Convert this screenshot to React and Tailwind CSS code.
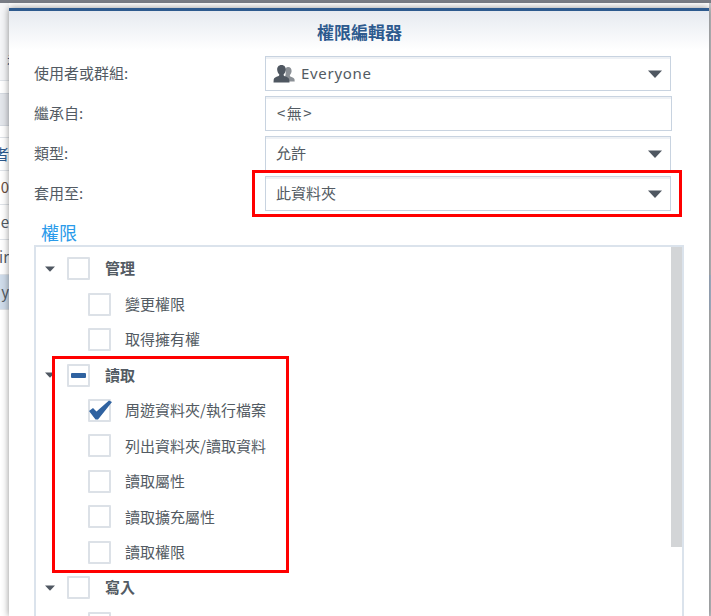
const font = { fontFamily: '"Noto Sans CJK TC", "Noto Sans", sans-serif' };

const permissionRows = [
  { label: "管理", group: true },
  { label: "變更權限" },
  { label: "取得擁有權" },
  { label: "讀取", group: true, state: "partial" },
  { label: "周遊資料夾/執行檔案", state: "checked" },
  { label: "列出資料夾/讀取資料" },
  { label: "讀取屬性" },
  { label: "讀取擴充屬性" },
  { label: "讀取權限" },
  { label: "寫入", group: true },
  { label: "" },
];

function Caret({ className }) {
  return (
    <svg className={className} viewBox="0 0 14 8" width="14" height="8">
      <path d="M0 0.5h14L7 8z" fill="#4f5761" />
    </svg>
  );
}

function GroupIcon() {
  return (
    <svg viewBox="0 0 22 20" width="22" height="20" className="shrink-0">
      <path d="M15 3c2.6 0 3.8 2 3.6 4.3-.1 1.500-.8 2.900-1.700 3.700-.2.800.1 1.300 1 1.700 1.600.6 3.300 1.200 3.600 2.600l.2 2.200h-5.700c0-2.800-1.500-3.700-4-4.700.9-2.500 1-5 .1-7C12.500 4 13.500 3 15 3z" fill="#8b9096" />
      <path d="M8.500 1c3 0 4.500 2.300 4.200 5-.2 1.800-.9 3.400-2 4.300-.2 1 .1 1.600 1.200 2 2 .8 4 1.500 4.300 3.200l.3 3H.500l.2-3c.3-1.700 2.300-2.400 4.300-3.200 1.100-.4 1.400-1 1.200-2-1.100-.9-1.800-2.500-2-4.300C3.900 3.300 5.500 1 8.500 1z" fill="#4f5761" />
    </svg>
  );
}

function Field({ label, select, children, wide }) {
  return (
    <div className="flex h-[40px] items-start">
      <div className="w-[231px] pt-[7px] text-[15px] leading-[20px] text-[#535b63]">{label}</div>
      <div
        className={`flex h-[35px] items-center border border-[#c8d3e0] bg-white pl-[10px] pr-[8px] text-[15px] text-[#535b63] shadow-[inset_0_2px_0_#eef1f5] ${wide ? "w-[407px]" : "w-[406px]"}`}
      >
        <div className="flex flex-1 items-center">{children}</div>
        {select && <Caret />}
      </div>
    </div>
  );
}

function Checkbox({ state }) {
  return (
    <div className="flex h-[23px] w-[23px] shrink-0 items-center justify-center rounded-[1px] border-2 border-[#dce1e7] bg-white">
      {state === "partial" && <div className="h-[5px] w-[15px] rounded-[1px] bg-[#2f62a0]" />}
      {state === "checked" && (
        <svg viewBox="0 0 24 20" width="24" height="20" className="-mt-[1px] ml-[1px] shrink-0">
          <path d="M1 11l4-3 3.500 3.500L21 .500l3 1.500L10 19.500H7.500z" fill="#2f62a0" />
        </svg>
      )}
    </div>
  );
}

function PermissionRow({ label, group, state }) {
  return (
    <div className="flex h-[35.45px] shrink-0 items-center">
      {group ? (
        <>
          <Caret className="ml-[9px] mr-[12px] h-[6px] w-[10px]" />
          <Checkbox state={state} />
          <span className="ml-[15px] text-[15px] font-bold text-[#535b63]">{label}</span>
        </>
      ) : (
        <>
          <div className="w-[52px]" />
          <Checkbox state={state} />
          <span className="ml-[14px] text-[15px] text-[#535b63]">{label}</span>
        </>
      )}
    </div>
  );
}

function BackRow({ children, className }) {
  return (
    <div className={`flex h-[34px] items-center justify-end overflow-hidden border-b border-[#dfe3e8] text-[15px] ${className}`}>
      {children}
    </div>
  );
}

export default function App() {
  return (
    <div className="relative flex h-[616px] w-[711px] flex-col overflow-hidden bg-white" style={font}>
      <div className="h-[3px] shrink-0 bg-[#787c85]" />
      <div className="flex min-h-0 flex-1">
        {/* page behind the dialog */}
        <div className="flex w-[9px] shrink-0 flex-col bg-[#f4f5f7]">
          <div className="flex h-[77px] shrink-0 items-center overflow-hidden pl-[7px] pt-[34px] text-[14px] text-[#2d5a8e]">
            <span className="shrink-0">未</span>
          </div>
          <div className="h-[13px] border-t border-[#dfe3e8] bg-white" />
          <div className="h-[33px] border-y border-[#d5dae1] bg-[#e3e6eb]" />
          <div className="h-[11px] bg-white" />
          <BackRow className="border-t bg-white text-[#2d5a8e]"><span className="whitespace-nowrap">者</span></BackRow>
          <BackRow className="bg-white text-[#6b4f3f]"><span>0</span></BackRow>
          <BackRow className="h-[35px] bg-white text-[#535b63]"><span>ne</span></BackRow>
          <BackRow className="h-[35px] bg-white text-[#535b63]"><span>ir</span></BackRow>
          <BackRow className="h-[35px] bg-[#cfdcea] text-[#535b63]"><span>y</span></BackRow>
          <div className="flex-1 bg-white" />
        </div>

        <div className="relative z-10 mt-[5px] flex w-[700px] shrink-0 flex-col border-t-[3px] border-[#2d5a8e] bg-white shadow-[0_0_7px_rgba(0,0,0,0.45)]">
          <div className="flex h-[39px] shrink-0 items-center justify-center bg-gradient-to-b from-[#e6eaf0] to-white pl-[1px] pt-[3px] text-[17px] font-bold text-[#2d5a8e]">
            權限編輯器
          </div>
          <div className="pl-[25px] pt-[6px]">
            <Field label="使用者或群組:" select>
              <span className="-ml-[3px]"><GroupIcon /></span>
              <span className="ml-[6px] text-[15px] tracking-[0.7px]" style={{ fontFamily: '"Noto Sans", sans-serif' }}>Everyone</span>
            </Field>
            <Field label="繼承自:" wide>
              <span className="pl-[1px] tracking-[1.500px]">&lt;無&gt;</span>
            </Field>
            <Field label="類型:" select>允許</Field>
            <Field label="套用至:" select>此資料夾</Field>
          </div>
          <div className="ml-[32px] h-[29px] pt-[3px] text-[18px] leading-[26px] text-[#2a9bea]">權限</div>
          <div className="ml-[25px] flex min-h-0 w-[650px] flex-1 border-l-2 border-r-2 border-t-2 border-[#dbe3ec]">
            <div className="flex min-w-0 flex-1 flex-col overflow-hidden pt-[4px]">
              {permissionRows.map((r, i) => (
                <PermissionRow key={i} {...r} />
              ))}
            </div>
            <div className="h-[300px] w-[11px] shrink-0 bg-[#d3d5d7]" />
          </div>
        </div>

        <div className="mt-0 flex w-[2px] shrink-0 flex-col bg-[#c4c6c9]">
          <div className="mt-[272px] h-[35px] bg-[#b4c3d8]" />
        </div>
      </div>

      {/* red annotation boxes */}
      <div className="absolute left-[252px] top-[170px] z-20 h-[47px] w-[430px] border-[3px] border-[#ff0000]" />
      <div className="absolute left-[52px] top-[356px] z-20 h-[217px] w-[237px] border-[3px] border-[#ff0000]" />
    </div>
  );
}
